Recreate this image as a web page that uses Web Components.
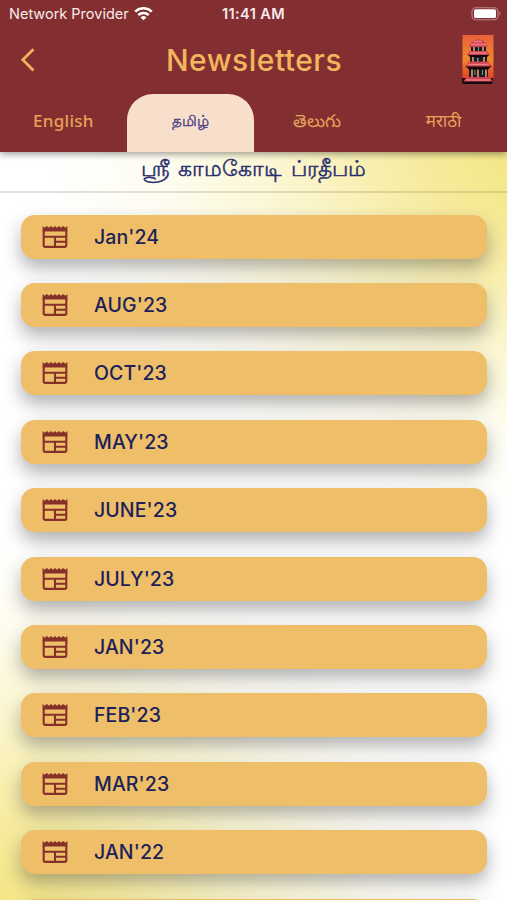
<!DOCTYPE html>
<html lang="en">
<head>
<meta charset="utf-8">
<meta name="viewport" content="width=device-width, initial-scale=1">
<title>Newsletters</title>
<style>
  body {
    margin: 0;
    height: 900px;
    overflow: hidden;
    font-family: Inter, "Noto Sans", sans-serif;
  }
</style>
</head>
<body>
<newsletter-app>
  <status-bar slot="header" carrier="Network Provider" time="11:41 AM"></status-bar>
  <title-bar slot="header">Newsletters</title-bar>
  <language-tabs slot="header">
    <language-tab style="--face: 'Noto Sans'; --weight: 500; --gap: 0.3px">English</language-tab>
    <language-tab active lang="ta" style="--size: 14.8px">தமிழ்</language-tab>
    <language-tab lang="te" style="--size: 17.5px">తెలుగు</language-tab>
    <language-tab lang="mr">मराठी</language-tab>
  </language-tabs>
  <section-title lang="ta">ஸ்ரீ காமகோடி ப்ரதீபம்</section-title>
  <issue-list>
    <issue-row>Jan'24</issue-row>
    <issue-row>AUG'23</issue-row>
    <issue-row>OCT'23</issue-row>
    <issue-row>MAY'23</issue-row>
    <issue-row>JUNE'23</issue-row>
    <issue-row>JULY'23</issue-row>
    <issue-row>JAN'23</issue-row>
    <issue-row>FEB'23</issue-row>
    <issue-row>MAR'23</issue-row>
    <issue-row>JAN'22</issue-row>
    <issue-row></issue-row>
  </issue-list>
</newsletter-app>

<script>
class NewsletterApp extends HTMLElement {
  connectedCallback() {
    this.attachShadow({ mode: 'open' });
    this.shadowRoot.innerHTML = `
      <style>
        :host {
          display: flex;
          flex-direction: column;
          height: 900px;
          overflow: hidden;
          background:
            radial-gradient(ellipse 500px 350px at 108% 18%, #f3e57f 0%, rgba(245, 232, 140, 0.85) 25%, rgba(249, 240, 175, 0.55) 55%, rgba(252, 247, 210, 0.3) 78%, rgba(255, 255, 255, 0) 100%),
            radial-gradient(ellipse 500px 400px at -5% 104%, #f3e37a 0%, rgba(245, 232, 140, 0.85) 28%, rgba(249, 240, 175, 0.55) 58%, rgba(252, 247, 210, 0.3) 80%, rgba(255, 255, 255, 0) 100%),
            #fff;
        }
        header {
          flex: none;
          height: 152px;
          background: #832f31;
          box-shadow: 0 2px 7px rgba(0, 0, 0, 0.4);
          position: relative;
          z-index: 1;
        }
        main {
          flex: 1;
          min-height: 0;
        }
      </style>
      <header><slot name="header"></slot></header>
      <main><slot></slot></main>
    `;
  }
}

class StatusBar extends HTMLElement {
  connectedCallback() {
    this.attachShadow({ mode: 'open' });
    this.shadowRoot.innerHTML = `
      <style>
        :host {
          display: grid;
          grid-template-columns: 1fr auto 1fr;
          align-items: center;
          height: 28px;
          padding: 0 9px;
          color: #f9e9e9;
          font-size: 14.5px;
          line-height: 28px;
        }
        .carrier {
          display: flex;
          align-items: center;
          gap: 5px;
        }
        .time {
          font-weight: 600;
          letter-spacing: 0.4px;
        }
        .battery {
          justify-self: end;
          margin-right: -5px;
        }
        svg {
          display: block;
        }
      </style>
      <div class="carrier">
        <span>${this.getAttribute('carrier')}</span>
        <svg width="19" height="14" viewBox="0 0 19 14" fill="none" stroke="#fff" stroke-width="2.6">
          <path d="M1.2 4.6a12 12 0 0 1 16.6 0"/>
          <path d="M4.3 8a7.6 7.6 0 0 1 10.4 0"/>
          <path d="M9.5 13.3L6.6 10.4a4.2 4.2 0 0 1 5.8 0z" fill="#fff" stroke="none"/>
        </svg>
      </div>
      <div class="time">${this.getAttribute('time')}</div>
      <svg class="battery" width="32" height="14" viewBox="0 0 32 14">
        <rect x="1" y="0.7" width="26" height="12" rx="4" fill="none" stroke="#bd8788" stroke-width="1.1"/>
        <rect x="3" y="2.3" width="22" height="8.8" rx="1.6" fill="#fff"/>
        <path d="M28.4 4.5q2 2.2 0 4.4z" fill="#bd8788"/>
      </svg>
    `;
  }
}

class TitleBar extends HTMLElement {
  connectedCallback() {
    this.attachShadow({ mode: 'open' });
    this.shadowRoot.innerHTML = `
      <style>
        :host {
          display: grid;
          grid-template-columns: 1fr auto 1fr;
          align-items: center;
          height: 64px;
          padding: 0 13px 0 14px;
          box-sizing: border-box;
        }
        h1 {
          margin: 0;
          color: #f2b65f;
          font-size: 30px;
          font-weight: 450;
          line-height: 64px;
          letter-spacing: 0.5px;
        }
        .back {
          margin-left: 6px;
        }
        .emblem {
          justify-self: end;
        }
        svg {
          display: block;
        }
      </style>
      <svg class="back" width="16" height="26" viewBox="0 0 16 26" fill="none" stroke="#f2b15c" stroke-width="2.8">
        <path d="M13.5 2.2L2.8 12.8l10.7 10.7"/>
      </svg>
      <h1><slot></slot></h1>
      <svg class="emblem" width="32" height="50" viewBox="0 0 32 50">
        <defs>
          <linearGradient id="sky" x2="0" y2="1">
            <stop offset="0" stop-color="#e9603a"/>
            <stop offset="0.55" stop-color="#f08a2c"/>
            <stop offset="1" stop-color="#e0401f"/>
          </linearGradient>
        </defs>
        <rect x="0.5" width="31" height="44" fill="url(#sky)"/>
        <path d="M9 11h15v7H9zM8 21h17v8H8zM7 32h19v10H7z" fill="#171c1c"/>
        <path d="M11 12h2v6h-2zM20 12h2v6h-2zM10 22h2v6h-2zM21 22h2v6h-2zM9 34h2v8H9zM15 34h2v8h-2zM23 34h2v8h-2z" fill="#c97d5c"/>
        <path d="M16 12h1v5h-1zM15 23h1.5v5H15zM12.5 35h1v5h-1zM20 35h1v5h-1z" fill="#63a79c"/>
        <path d="M5 19h23l-3 3H8zM3 31h27l-4 3.5H7zM0 43h31v3l-1 3H1l-1-2z" fill="#15090d"/>
        <path d="M12 5.5q4.5-3 9 0l3 3 1.500 3.500H7l1.500-3.500zM8 16h17l3 4H5zM7 26.5h19l4 5H3zM5 42h23l3 4.500H1z" fill="#cf4350"/>
        <path d="M12 6.5h8M9 9.5h15M8 18h17M6 29.5h21M4 45h24" stroke="#ee7f84" stroke-width="1.4"/>
      </svg>
    `;
  }
}

class LanguageTabs extends HTMLElement {
  connectedCallback() {
    this.attachShadow({ mode: 'open' });
    this.shadowRoot.innerHTML = `
      <style>
        :host {
          display: grid;
          grid-template-columns: repeat(4, 1fr);
          height: 60px;
          padding-top: 1.5px;
          box-sizing: border-box;
        }
      </style>
      <slot></slot>
    `;
  }
}

class LanguageTab extends HTMLElement {
  connectedCallback() {
    this.attachShadow({ mode: 'open' });
    this.shadowRoot.innerHTML = `
      <style>
        :host {
          display: flex;
          align-items: center;
          justify-content: center;
          padding-bottom: 3px;
          color: #e6a259;
          font-family: var(--face, Inter), "Noto Sans", sans-serif;
          font-size: var(--size, 17px);
          font-weight: var(--weight, 400);
          letter-spacing: var(--gap, 0);
          line-height: 24px;
        }
        :host([active]) {
          background: #f8dfcb;
          border-radius: 26px 26px 0 0;
          color: #4b4284;
          -webkit-text-stroke: 0.4px currentColor;
        }
      </style>
      <slot></slot>
    `;
  }
}

class SectionTitle extends HTMLElement {
  connectedCallback() {
    this.attachShadow({ mode: 'open' });
    this.shadowRoot.innerHTML = `
      <style>
        :host {
          display: block;
          height: 41px;
          box-sizing: border-box;
          border-bottom: 2px solid rgba(80, 70, 50, 0.16);
          color: #2a306f;
          font-size: 22.4px;
          line-height: 32px;
          text-align: center;
          white-space: nowrap;
          word-spacing: 2px;
          -webkit-text-stroke: 0.45px currentColor;
        }
      </style>
      <slot></slot>
    `;
  }
}

class IssueList extends HTMLElement {
  connectedCallback() {
    this.attachShadow({ mode: 'open' });
    this.shadowRoot.innerHTML = `
      <style>
        :host {
          display: flex;
          flex-direction: column;
          gap: 24.4px;
          padding: 21.6px 20px 0 20.5px;
        }
      </style>
      <slot></slot>
    `;
  }
}

class IssueRow extends HTMLElement {
  connectedCallback() {
    this.attachShadow({ mode: 'open' });
    this.shadowRoot.innerHTML = `
      <style>
        :host {
          display: flex;
          align-items: center;
          gap: 26.5px;
          height: 44px;
          padding-left: 21px;
          box-sizing: border-box;
          border-radius: 14px;
          background: #eebf68;
          box-shadow: 0 9px 18px rgba(30, 30, 40, 0.34);
          color: #1d2159;
          font-size: 19.5px;
          font-weight: 470;
          letter-spacing: 0.1px;
        }
        svg {
          flex: none;
        }
      </style>
      <svg width="26" height="24" viewBox="0 0 26 24">
        <path d="M.6 1l2 1.8L4.8 1 7 2.8 9 1l2 1.8L13 1l2 1.8L17 1l2 1.8L21.2 1l2.2 1.8L25.4 1v5.6H.6z" fill="#86302a"/>
        <path d="M1.7 5v15.2q0 1.7 1.7 1.7h19.2q1.7 0 1.7-1.7V5M1.7 11.7h22.6M13 11.7v10.2M13 16.8h11.3" fill="none" stroke="#86302a" stroke-width="2.1"/>
      </svg>
      <span><slot></slot></span>
    `;
  }
}

customElements.define('newsletter-app', NewsletterApp);
customElements.define('status-bar', StatusBar);
customElements.define('title-bar', TitleBar);
customElements.define('language-tabs', LanguageTabs);
customElements.define('language-tab', LanguageTab);
customElements.define('section-title', SectionTitle);
customElements.define('issue-list', IssueList);
customElements.define('issue-row', IssueRow);
</script>
</body>
</html>
